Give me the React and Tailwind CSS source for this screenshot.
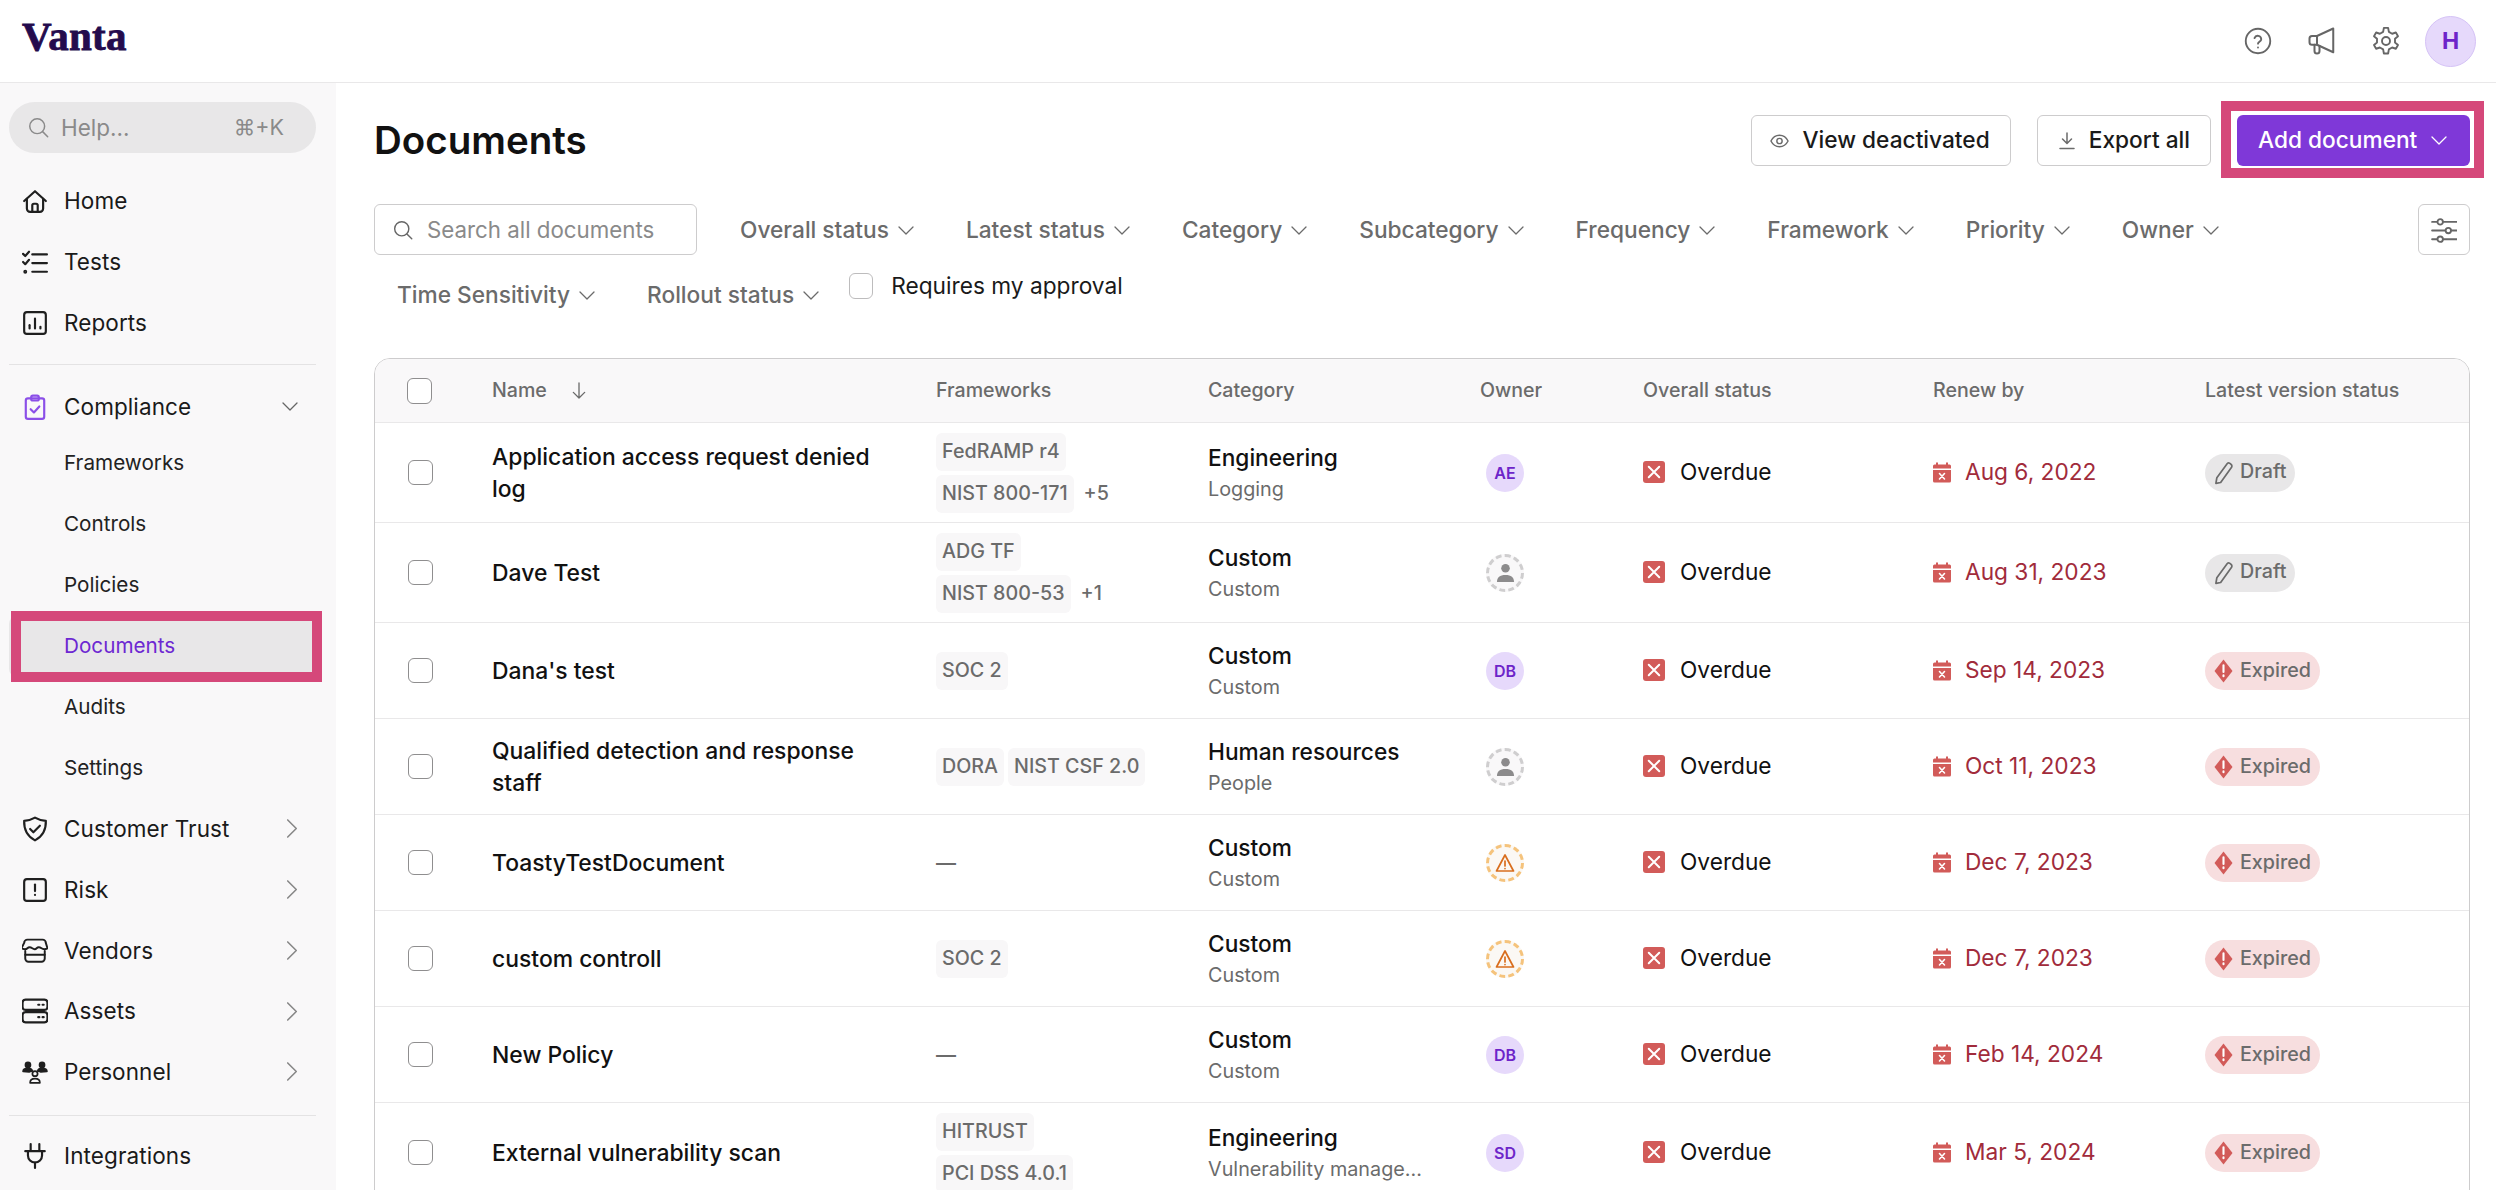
import React from "react";

const Chevron = ({ className = "", dir = "down" }) => (
  <svg viewBox="0 0 16 9" className={`w-4 h-[9px] shrink-0 ${dir === "right" ? "-rotate-90" : ""} ${className}`} fill="none" stroke="currentColor" strokeWidth="1.3" strokeLinecap="round" strokeLinejoin="round">
    <path d="M1 1l7 7 7-7" />
  </svg>
);

const Ico = ({ children, className = "w-[26px] h-[26px]", stroke = "currentColor", sw = 2, vb = "0 0 24 24" }) => (
  <svg viewBox={vb} className={`shrink-0 ${className}`} fill="none" stroke={stroke} strokeWidth={sw} strokeLinecap="round" strokeLinejoin="round">
    {children}
  </svg>
);

const icons = {
  home: <Ico><path d="M2 12 12 3l10 9" /><path d="M4.5 10v9a3 3 0 0 0 3 3h9a3 3 0 0 0 3-3v-9" /><path d="M9.5 22v-6a1.5 1.5 0 0 1 1.5-1.5h2a1.5 1.5 0 0 1 1.5 1.5v6" /></Ico>,
  tests: <Ico><path d="M1 4.5 3 6.5 6.5 2.5" /><path d="M1 12l2 2 3.5-4" /><path d="M9.5 5H23" /><path d="M9.5 13H23" /><path d="M9.5 21H23" /><circle cx="3" cy="21" r=".8" /></Ico>,
  reports: <Ico><rect x="2" y="2" width="20" height="20" rx="2.5" /><path d="M7 17v-3" /><path d="M12 17V8" /><path d="M17 17v-1.5" /></Ico>,
  compliance: <Ico stroke="#8B4FE8"><rect x="3.5" y="4" width="17" height="19" rx="2" /><rect x="8.5" y="1.5" width="7" height="4.5" rx="1.5" /><path d="m8 14 3 3 5-5.5" /></Ico>,
  shield: <Ico><path d="M12 1.500c3 1.800 6 2.700 10 3 .3 8-2.500 14-10 18-7.500-4-10.300-10-10-18 4-.3 7-1.200 10-3z" /><path d="m7.500 12 3 3 6-6" /></Ico>,
  risk: <Ico><rect x="2" y="2" width="20" height="20" rx="2.500" /><path d="M12 7v6" /><path d="M12 16.500v.1" /></Ico>,
  vendors: <Ico sw={1.8}><path d="M5 1.500h14a3 3 0 0 1 3 3l1.500 5c-2 1-4 1-5.500 0-1.500-1-3.500-1-4.500 0s-2.500 1-4 0-3.500-1-4.500 0-3.500 1-5.500 0L2 4.500a3 3 0 0 1 3-3z" /><path d="M3 12v7a3 3 0 0 0 3 3h12a3 3 0 0 0 3-3v-7" /><path d="M3 15.500h18" /></Ico>,
  assets: <Ico><rect x=".5" y="1.500" width="23" height="9.500" rx="2.800" /><rect x=".5" y="13" width="23" height="9.500" rx="2.800" /><path d="M15 6.200h1M19 6.200h1M15 17.700h1M19 17.700h1" /></Ico>,
  personnel: <Ico sw={1.6}><circle cx="12" cy="13.500" r="2.400" /><path d="M7.500 22c0-2.700 2-3.800 4.500-3.800s4.500 1.100 4.500 3.800z" /><circle cx="5.500" cy="5.500" r="2.300" fill="currentColor" /><circle cx="18.500" cy="5.500" r="2.300" fill="currentColor" /><path d="M1 11.500c0-2 2-2.800 4.500-2.800s3.500.5 4 2.300c-1.500.3-2.500.6-3 .9z" fill="currentColor" /><path d="M23 11.500c0-2-2-2.800-4.500-2.800s-3.500.5-4 2.300c1.500.3 2.500.6 3 .9z" fill="currentColor" /></Ico>,
  plug: <Ico><path d="M8 1v6" /><path d="M16 1v6" /><path d="M3 7.500h18" /><path d="M5.500 7.500v4a6.500 6.500 0 0 0 13 0v-4" /><path d="M12 18v5" /></Ico>,
};

const Item = ({ icon, label, chevron, h = "h-[61px]", cls = "" }) => (
  <div className={`${h} pb-[2px] flex items-center text-[#1a1a1a] ${cls}`}>
    <div className="w-[55px] flex justify-center text-[#1f1f1f] pr-[3px] shrink-0">{icon}</div>
    <span className="text-[22.500px] tracking-[0.1px]">{label}</span>
    {chevron === "right" && <Chevron dir="right" className="ml-auto mr-[14px] !w-[20px] !h-[11px] text-[#888]" />}
    {chevron === "down" && <Chevron className="ml-auto mr-[18px] !w-[16px] text-[#666]" />}
  </div>
);

const Sub = ({ label }) => (
  <div className="h-[61px] pb-[1px] flex items-center pl-[55px] text-[20.700px] text-[#222]">{label}</div>
);

const Sidebar = () => (
  <aside className="w-[336px] shrink-0 bg-[#F9F8F9] px-[9px] pt-[19px] overflow-hidden">
    <div className="w-[307px] h-[51px] rounded-full bg-[#E8E7E8] flex items-center pl-[19px] pr-[32px] text-[#8a8a8a] text-[22.500px]">
      <Ico className="w-[21px] h-[21px]" sw={1.7}><circle cx="10.500" cy="10.500" r="8.500" /><path d="m17 17 5.500 5.500" /></Ico>
      <span className="ml-[12px]">Help...</span>
      <span className="ml-auto text-[21.500px]">⌘+K</span>
    </div>
    <div className="w-[307px]">
      <div className="mt-[18px]" />
      <Item icon={icons.home} label="Home" />
      <Item icon={icons.tests} label="Tests" />
      <Item icon={icons.reports} label="Reports" />
      <div className="h-px bg-[#E4E3E4] mt-[10px]" />
      <div className="mt-[17px]" />
      <Item icon={icons.compliance} label="Compliance" chevron="down" h="h-[51px]" />
      <Sub label="Frameworks" />
      <Sub label="Controls" />
      <Sub label="Policies" />
      <div className="relative h-[61px] pb-[1px] flex items-center pl-[55px] bg-[#E8E7E8] rounded-lg text-[20.700px] text-[#6D28D2]">
        Documents
        <div className="absolute left-[2px] right-[-6px] top-[-5px] bottom-[-5px] border-[10px] border-[#D5487A]" />
      </div>
      <Sub label="Audits" />
      <Sub label="Settings" />
      <Item icon={icons.shield} label="Customer Trust" chevron="right" />
      <Item icon={icons.risk} label="Risk" chevron="right" />
      <Item icon={icons.vendors} label="Vendors" chevron="right" />
      <Item icon={icons.assets} label="Assets" chevron="right" h="h-[60px]" />
      <Item icon={icons.personnel} label="Personnel" chevron="right" />
      <div className="h-px bg-[#E4E3E4] mt-[12px]" />
      <div className="mt-[10px]" />
      <Item icon={icons.plug} label="Integrations" />
    </div>
  </aside>
);

const TopBar = () => (
  <header className="h-[83px] shrink-0 border-b border-[#E9E8E9] bg-white flex items-center pl-[22px] pr-[20px]">
    <span className="text-[41px] leading-none font-bold text-[#240B4D] tracking-[0.3px] mt-[-10px] [-webkit-text-stroke:0.8px_#240B4D] [font-family:'Liberation_Serif',serif]">Vanta</span>
    <div className="ml-auto flex items-center text-[#666]">
      <Ico className="w-[28px] h-[28px]" sw={1.6}><circle cx="12" cy="12" r="10.500" /><path d="M9 9.500a3 3 0 0 1 5.800 1c0 2-2.800 2.300-2.800 3.800" /><path d="M12 17.500v.1" /></Ico>
      <Ico className="w-[30px] h-[30px] ml-[35px]" sw={1.6}><path d="M21 2 8 8H4a2 2 0 0 0-2 2v3a2 2 0 0 0 2 2h4l13 6z" /><path d="M8 8v7" /><path d="M6 15v5a2 2 0 0 0 4 0v-4" /></Ico>
      <Ico className="w-[30px] h-[30px] ml-[34px]" sw={1.5}><circle cx="12" cy="12" r="3.200" /><path d="M10.300 1.500h3.400l.6 3.200 2.600 1.500 3-1 1.700 3-2.400 2v3l2.400 2-1.700 3-3-1-2.600 1.500-.6 3.300h-3.400l-.6-3.300-2.600-1.500-3 1-1.700-3 2.400-2v-3l-2.400-2 1.700-3 3 1 2.600-1.500z" /></Ico>
      <div className="ml-[24px] w-[51px] h-[51px] rounded-full bg-[#E6D9FB] border border-[#D5C2F6] flex items-center justify-center text-[#6D24C9] font-bold text-[23px]">H</div>
    </div>
  </header>
);

const Btn = ({ children }) => (
  <button className="h-[51px] rounded-[6px] border border-[#CDCCCD] bg-white flex items-center text-[22.700px] font-medium text-[#1a1a1a]">{children}</button>
);

const Filter = ({ label }) => (
  <div className="h-[51px] pt-[1px] flex items-center pl-[23px] pr-[9px] text-[22.700px] font-medium text-[#6B6B6B] whitespace-nowrap">
    {label}
    <Chevron className="ml-[9px]" />
  </div>
);

const Box = ({ cls = "" }) => <div className={`w-[25px] h-[25px] rounded-[6px] border border-[#8f8e8f] bg-white shrink-0 ${cls}`} />;

const Tag = ({ children }) => (
  <span className="h-[38px] px-[6px] rounded-[6px] bg-[#F8F7F8] text-[#6B6B6B] text-[19.700px] font-medium flex items-center whitespace-nowrap">{children}</span>
);

const Avatar = ({ kind }) => {
  if (kind === "none")
    return (
      <div className="w-[38px] h-[38px] rounded-full border-[3px] border-dashed border-[#CFCECF] bg-[#F9F8F9] flex items-center justify-center">
        <svg viewBox="0 0 20 20" className="w-[19px] h-[19px]" fill="#8C8B8C"><circle cx="10" cy="5.500" r="4.500" /><path d="M1 20c0-5 3-7.500 9-7.500s9 2.500 9 7.500z" /></svg>
      </div>
    );
  if (kind === "warn")
    return (
      <div className="w-[38px] h-[38px] rounded-full border-[3px] border-dashed border-[#F5C37C] bg-[#FBF8F4] flex items-center justify-center">
        <svg viewBox="0 0 20 20" className="w-[20px] h-[20px]" fill="none" stroke="#D96E1E" strokeWidth="1.700" strokeLinejoin="round" strokeLinecap="round"><path d="M10 2 1.500 18h17z" /><path d="M10 8v5M10 15.500v.1" /></svg>
      </div>
    );
  return (
    <div className="w-[38px] h-[38px] rounded-full bg-[#E6D9FB] flex items-center justify-center text-[#6D24C9] text-[16px] font-semibold">{kind}</div>
  );
};

const Overdue = () => (
  <div className="flex items-center">
    <div className="w-[22px] h-[22px] rounded-[3px] bg-[#D25B59] flex items-center justify-center">
      <svg viewBox="0 0 12 12" className="w-[14px] h-[14px]" stroke="#fff" strokeWidth="1.700" strokeLinecap="round"><path d="m1.500 1.500 9 9M10.500 1.500l-9 9" /></svg>
    </div>
    <span className="ml-[15px] pb-[1px] text-[22.700px] text-[#111]">Overdue</span>
  </div>
);

const Renew = ({ date }) => (
  <div className="flex items-center">
    <svg viewBox="0 0 18 20" className="w-[18px] h-[21px] shrink-0">
      <path d="M3 0h2v2h8V0h2v2h1.500A1.500 1.500 0 0 1 18 3.500V6H0V3.500A1.500 1.500 0 0 1 1.500 2H3z" fill="#D25B59" />
      <path d="M0 7.500h18v11a1.500 1.500 0 0 1-1.500 1.500h-15A1.500 1.500 0 0 1 0 18.500z" fill="#D25B59" />
      <path d="m6.500 11 5 5.500M11.500 11l-5 5.500" stroke="#fff" strokeWidth="1.600" strokeLinecap="round" />
    </svg>
    <span className="ml-[14px] pb-[1px] text-[22.700px] text-[#A12B3B]">{date}</span>
  </div>
);

const Badge = ({ kind }) =>
  kind === "Draft" ? (
    <div className="h-[38px] w-[90px] rounded-full bg-[#E8E7E8] flex items-center pl-[9px] text-[#6B6B6B] text-[19.700px] font-medium">
      <svg viewBox="0 0 20 24" className="w-[19px] h-[24px] shrink-0" fill="none" stroke="#6B6B6B" strokeWidth="1.800" strokeLinejoin="round"><path d="M3 17 14 2c1-1 3 0 4 1s1 2 .5 3L7 22l-5 1z" /></svg>
      <span className="ml-[7px] pb-[1px]">Draft</span>
    </div>
  ) : (
    <div className="h-[38px] w-[115px] rounded-full bg-[#F7DEDF] flex items-center pl-[9px] text-[#6B6B6B] text-[19.700px] font-medium">
      <svg viewBox="0 0 20 24" className="w-[19px] h-[24px] shrink-0"><path d="M10 0 19.500 12 10 24 .5 12z" fill="#D25B59" /><path d="M10 6v7M10 16.500v1" stroke="#fff" strokeWidth="2.200" strokeLinecap="round" /></svg>
      <span className="ml-[7px]">Expired</span>
    </div>
  );

const rows = [
  { h: "h-[100px]", name: "Application access request denied log", fw: [["FedRAMP r4"], ["NIST 800-171", "+5"]], cat: "Engineering", sub: "Logging", owner: "AE", date: "Aug 6, 2022", st: "Draft" },
  { h: "h-[100px]", name: "Dave Test", fw: [["ADG TF"], ["NIST 800-53", "+1"]], cat: "Custom", sub: "Custom", owner: "none", date: "Aug 31, 2023", st: "Draft" },
  { h: "h-[96px]", name: "Dana's test", fw: [["SOC 2"]], cat: "Custom", sub: "Custom", owner: "DB", date: "Sep 14, 2023", st: "Expired" },
  { h: "h-[96px]", name: "Qualified detection and response staff", fw: [["DORA", null, "NIST CSF 2.0"]], cat: "Human resources", sub: "People", owner: "none", date: "Oct 11, 2023", st: "Expired" },
  { h: "h-[96px]", name: "ToastyTestDocument", fw: [], cat: "Custom", sub: "Custom", owner: "warn", date: "Dec 7, 2023", st: "Expired" },
  { h: "h-[96px]", name: "custom controll", fw: [["SOC 2"]], cat: "Custom", sub: "Custom", owner: "warn", date: "Dec 7, 2023", st: "Expired" },
  { h: "h-[96px]", name: "New Policy", fw: [], cat: "Custom", sub: "Custom", owner: "DB", date: "Feb 14, 2024", st: "Expired" },
  { h: "h-[100px]", name: "External vulnerability scan", fw: [["HITRUST"], ["PCI DSS 4.0.1"]], cat: "Engineering", sub: "Vulnerability manage...", owner: "SD", date: "Mar 5, 2024", st: "Expired" },
];

const Row = ({ r }) => (
  <div className={`${r.h} shrink-0 border-b border-[#E9E8E9] flex items-center bg-white`}>
    <div className="w-[117px] pl-[33px] shrink-0"><Box /></div>
    <div className="w-[444px] shrink-0 pr-[60px] text-[22.900px] leading-[32px] font-medium text-[#111]">{r.name}</div>
    <div className="w-[272px] shrink-0 flex flex-col gap-[4px] items-start">
      {r.fw.length === 0 && <span className="text-[20px] text-[#6B6B6B] font-medium">—</span>}
      {r.fw.map((line, i) => (
        <div key={i} className="flex items-center gap-[4px]">
          <Tag>{line[0]}</Tag>
          {line[1] && <span className="ml-[6px] text-[19.700px] font-medium text-[#6B6B6B]">{line[1]}</span>}
          {line[2] && <Tag>{line[2]}</Tag>}
        </div>
      ))}
    </div>
    <div className="w-[272px] shrink-0 flex flex-col pt-[2px]">
      <span className="text-[22.700px] leading-[30px] font-medium text-[#111]">{r.cat}</span>
      <span className="text-[19.800px] leading-[30px] mt-[1px] text-[#6B6B6B]">{r.sub}</span>
    </div>
    <div className="w-[163px] shrink-0 pl-[6px]"><Avatar kind={r.owner} /></div>
    <div className="w-[290px] shrink-0"><Overdue /></div>
    <div className="w-[272px] shrink-0"><Renew date={r.date} /></div>
    <div className="flex-1"><Badge kind={r.st} /></div>
  </div>
);

const Th = ({ w, children }) => <div className={`${w} shrink-0 flex items-center text-[19.600px] font-medium text-[#6B6B6B]`}>{children}</div>;

export default function App() {
  return (
    <div className="h-[1190px] w-[2496px] overflow-hidden flex flex-col bg-white [font-family:Inter,sans-serif]">
      <TopBar />
      <div className="flex flex-1 min-h-0">
        <Sidebar />
        <main className="flex-1 min-w-0 pl-[38px] pr-[26px] pt-[32px] overflow-hidden">
          <div className="flex items-center h-[51px]">
            <h1 className="text-[38.500px] font-semibold text-[#111]">Documents</h1>
            <div className="ml-auto flex items-center gap-[26px]">
              <Btn>
                <span className="pl-[18px]" />
                <svg viewBox="0 0 20 14" className="w-[19px] h-[14px]" fill="none" stroke="#6B6B6B" strokeWidth="1.500"><path d="M1 7c2-4 5-6 9-6s7 2 9 6c-2 4-5 6-9 6s-7-2-9-6z" /><circle cx="10" cy="7" r="2.800" /></svg>
                <span className="ml-[13px] pr-[20px]">View deactivated</span>
              </Btn>
              <Btn>
                <span className="pl-[21px]" />
                <svg viewBox="0 0 16 18" className="w-[16px] h-[18px]" fill="none" stroke="#6B6B6B" strokeWidth="1.500" strokeLinecap="round" strokeLinejoin="round"><path d="M8 1v10M3.500 7 8 11.500 12.500 7M1 16.500h14" /></svg>
                <span className="ml-[14px] pr-[20px]">Export all</span>
              </Btn>
              <div className="relative">
                <div className="absolute left-[-16px] right-[-14px] top-[-14px] bottom-[-12px] border-[10px] border-[#D5487A]" />
                <button className="relative h-[51px] w-[233px] rounded-[6px] bg-[#7F38D8] text-white text-[22.700px] font-medium flex items-center pl-[21px]">
                  Add document
                  <Chevron className="ml-[14px]" />
                </button>
              </div>
            </div>
          </div>

          <div className="flex items-start mt-[38px]">
            <div className="flex flex-wrap items-start gap-x-[20px] gap-y-[14px] w-[2030px]">
              <div className="w-[323px] h-[51px] rounded-[6px] border border-[#CDCCCD] flex items-center pl-[18px] text-[#8a8a8a] text-[22.300px] shrink-0">
                <Ico className="w-[20px] h-[22px]" sw={1.700} stroke="#666"><circle cx="10.500" cy="10.500" r="8.500" /><path d="m17 17 5.500 5.500" /></Ico>
                <span className="ml-[14px]">Search all documents</span>
              </div>
              {["Overall status", "Latest status", "Category", "Subcategory", "Frequency", "Framework", "Priority", "Owner", "Time Sensitivity", "Rollout status"].map((f) => (
                <Filter key={f} label={f} />
              ))}
              <div className="flex items-center h-[26px] mt-[4px] ml-[1px]">
                <Box cls="!w-[24px] !h-[26px] !border-[#BDBCBD]" />
                <span className="ml-[18px] text-[22.700px] text-[#1a1a1a] whitespace-nowrap">Requires my approval</span>
              </div>
            </div>
            <div className="ml-auto w-[52px] h-[51px] rounded-[6px] border border-[#CDCCCD] flex items-center justify-center text-[#666]">
              <Ico className="w-[26px] h-[26px]" sw={1.700}><path d="M1 4.500h24M1 12.500h24M1 20.500h24" /><circle cx="8.500" cy="4.500" r="2.500" fill="#fff" /><circle cx="16" cy="12.500" r="2.500" fill="#fff" /><circle cx="8.500" cy="20.500" r="2.500" fill="#fff" /></Ico>
            </div>
          </div>

          <div className="mt-[38px] rounded-t-[16px] border border-[#CDCCCD] overflow-hidden flex flex-col">
            <div className="h-[64px] shrink-0 bg-[#F9F8F9] border-b border-[#E9E8E9] flex items-center">
              <div className="w-[117px] pl-[32px] shrink-0"><Box cls="!h-[26px]" /></div>
              <Th w="w-[444px]">
                Name
                <svg viewBox="0 0 16 18" className="w-[16px] h-[17px] ml-[24px]" fill="none" stroke="#6B6B6B" strokeWidth="1.400" strokeLinecap="round" strokeLinejoin="round"><path d="M8 1v16M2 11l6 6 6-6" /></svg>
              </Th>
              <Th w="w-[272px]">Frameworks</Th>
              <Th w="w-[272px]">Category</Th>
              <Th w="w-[163px]">Owner</Th>
              <Th w="w-[290px]">Overall status</Th>
              <Th w="w-[272px]">Renew by</Th>
              <Th w="flex-1">Latest version status</Th>
            </div>
            {rows.map((r) => (
              <Row key={r.name} r={r} />
            ))}
          </div>
        </main>
      </div>
    </div>
  );
}
